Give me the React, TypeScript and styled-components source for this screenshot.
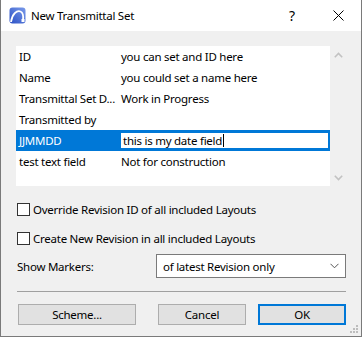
import React from "react";
import styled, { createGlobalStyle } from "styled-components";

const Global = createGlobalStyle`
  html, body { margin: 0; padding: 0; background: #fff; }
  * { box-sizing: border-box; }
  body {
    font-family: "Noto Sans", "Open Sans", Arial, sans-serif;
    font-size: 11.5px;
    letter-spacing: -0.25px;
    color: #000;
  }
`;

const Window = styled.div`
  width: 362px;
  height: 337px;
  border: 1px solid #7a7a7a;
  border-top: none;
  display: flex;
  flex-direction: column;
  background: #f0f0f0;
  position: relative;
`;

const TitleBar = styled.div`
  height: 31px;
  background: #fff;
  display: flex;
  align-items: center;
  padding-left: 8px;
`;

const TitleText = styled.span`
  margin-left: 5px;
  flex: 1;
`;

const TitleButton = styled.span`
  width: 46px;
  font-size: 14px;
  display: flex;
  justify-content: center;
  align-items: center;
`;

const Body = styled.div`
  flex: 1;
  padding: 15px 0 0 15px;
  display: flex;
  flex-direction: column;
`;

const ListWrap = styled.div`
  display: flex;
`;

const List = styled.div`
  width: 314px;
  height: 140px;
  background: #fff;
`;

const Row = styled.div<{ $selected?: boolean }>`
  height: 21px;
  display: flex;
  align-items: center;
  background: ${(p) => (p.$selected ? "#0078d7" : "transparent")};
  color: ${(p) => (p.$selected ? "#fff" : "#000")};
`;

const Label = styled.div`
  width: 103px;
  padding-left: 3px;
  white-space: nowrap;
`;

const Value = styled.div`
  padding-left: 2px;
  white-space: nowrap;
`;

const EditBox = styled.div`
  width: 211px;
  height: 19px;
  background: #fff;
  color: #000;
  border: 2px solid #0078d7;
  display: flex;
  align-items: center;
  padding-left: 2px;
`;

const Caret = styled.span`
  display: inline-block;
  width: 1px;
  height: 13px;
  background: #000;
  margin-left: 1px;
`;

const ScrollBar = styled.div`
  width: 17px;
  display: flex;
  flex-direction: column;
  justify-content: space-between;
  align-items: center;
  padding: 6px 0 5px;
`;

const CheckRow = styled.label<{ $top: number }>`
  display: flex;
  align-items: center;
  margin-top: ${(p) => p.$top}px;
  margin-left: 1px;
  height: 13px;
`;

const Box = styled.span`
  width: 13px;
  height: 13px;
  border: 1px solid #333;
  background: #fff;
  margin-right: 3px;
`;

const MarkersRow = styled.div`
  display: flex;
  align-items: center;
  margin-top: 9px;
  margin-left: 1px;
`;

const MarkersLabel = styled.span`
  width: 139px;
`;

const Select = styled.div`
  width: 190px;
  height: 24px;
  border: 1px solid #7a7a7a;
  background: #fff;
  display: flex;
  align-items: center;
  justify-content: space-between;
  padding: 0 6px 0 6px;
`;

const Separator = styled.div`
  margin-top: 13px;
  margin-left: 1px;
  width: 329px;
  height: 1px;
  background: #a0a0a0;
`;

const Buttons = styled.div`
  display: flex;
  margin-top: 12px;
  margin-left: 2px;
`;

const Button = styled.div<{ $w: number; $gap: number; $default?: boolean }>`
  width: ${(p) => p.$w}px;
  height: 21px;
  margin-left: ${(p) => p.$gap}px;
  background: #e1e1e1;
  border: ${(p) => (p.$default ? "2px solid #0078d7" : "1px solid #adadad")};
  display: flex;
  align-items: center;
  justify-content: center;
`;

const Grip = styled.svg`
  position: absolute;
  right: 2px;
  bottom: 2px;
`;

const Chevron = ({ up }: { up?: boolean }) => (
  <svg width="9" height="6" viewBox="0 0 9 6">
    <path
      d={up ? "M0.8 5.2 L4.5 1.5 L8.2 5.2" : "M0.8 0.8 L4.5 4.5 L8.2 0.8"}
      fill="none"
      stroke="#c2c2c2"
      strokeWidth="1.6"
    />
  </svg>
);

const Logo = () => (
  <svg width="17" height="17" viewBox="0 0 17 17">
    <defs>
      <linearGradient id="lg" x1="0" y1="1" x2="1" y2="0">
        <stop offset="0" stopColor="#2a4fc4" />
        <stop offset="1" stopColor="#7a9bea" />
      </linearGradient>
    </defs>
    <rect x="0.5" y="0.5" width="16" height="16" rx="3" fill="url(#lg)" />
    <path d="M2 15 C3 7 8 3 11.5 4.5 C14 5.5 14.5 9 14 13" fill="none" stroke="#fff" strokeWidth="1.8" />
    <rect x="12.5" y="12" width="3" height="3" fill="#fff" />
  </svg>
);

const rows = [
  ["ID", "you can set and ID here"],
  ["Name", "you could set a name here"],
  ["Transmittal Set D...", "Work in Progress"],
  ["Transmitted by", ""],
];

export default function App() {
  return (
    <>
      <Global />
      <Window>
        <TitleBar>
          <Logo />
          <TitleText>New Transmittal Set</TitleText>
          <TitleButton>?</TitleButton>
          <TitleButton>
            <svg width="11" height="11" viewBox="0 0 11 11">
              <path d="M0.5 0.5 L10.5 10.5 M10.5 0.5 L0.5 10.5" stroke="#000" strokeWidth="1" />
            </svg>
          </TitleButton>
        </TitleBar>
        <Body>
          <ListWrap>
            <List>
              {rows.map(([l, v]) => (
                <Row key={l}>
                  <Label>{l}</Label>
                  <Value>{v}</Value>
                </Row>
              ))}
              <Row $selected>
                <Label>JJMMDD</Label>
                <EditBox>
                  this is my date field
                  <Caret />
                </EditBox>
              </Row>
              <Row>
                <Label>test text field</Label>
                <Value>Not for construction</Value>
              </Row>
            </List>
            <ScrollBar>
              <Chevron up />
              <Chevron />
            </ScrollBar>
          </ListWrap>
          <CheckRow $top={17}>
            <Box />
            Override Revision ID of all included Layouts
          </CheckRow>
          <CheckRow $top={16}>
            <Box />
            Create New Revision in all included Layouts
          </CheckRow>
          <MarkersRow>
            <MarkersLabel>Show Markers:</MarkersLabel>
            <Select>
              of latest Revision only
              <svg width="9" height="6" viewBox="0 0 9 6">
                <path d="M0.5 0.8 L4.5 4.8 L8.5 0.8" fill="none" stroke="#555" strokeWidth="1" />
              </svg>
            </Select>
          </MarkersRow>
          <Separator />
          <Buttons>
            <Button $w={118} $gap={0}>Scheme...</Button>
            <Button $w={88} $gap={22}>Cancel</Button>
            <Button $w={88} $gap={12} $default>OK</Button>
          </Buttons>
        </Body>
        <Grip width="9" height="9" viewBox="0 0 9 9">
          <g fill="#bdbdbd">
            <rect x="6" y="0" width="2" height="2" />
            <rect x="3" y="3" width="2" height="2" />
            <rect x="6" y="3" width="2" height="2" />
            <rect x="0" y="6" width="2" height="2" />
            <rect x="3" y="6" width="2" height="2" />
            <rect x="6" y="6" width="2" height="2" />
          </g>
        </Grip>
      </Window>
    </>
  );
}
